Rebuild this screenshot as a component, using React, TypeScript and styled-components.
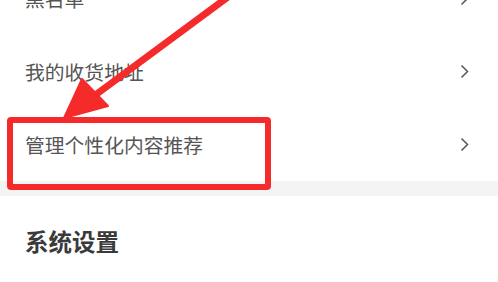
import styled, { createGlobalStyle } from "styled-components";

const GlobalStyle = createGlobalStyle`
  html, body {
    margin: 0;
    padding: 0;
    background: #ffffff;
    overflow: hidden;
  }
  body {
    font-family: "Noto Sans CJK SC", "Noto Sans", sans-serif;
  }
`;

const Page = styled.div`
  position: relative;
  width: 498px;
  height: 282px;
  overflow: hidden;
  background: #fff;
`;

const List = styled.div`
  display: flex;
  flex-direction: column;
  margin-top: -38px;
`;

const Row = styled.div`
  display: flex;
  align-items: center;
  justify-content: space-between;
  height: 73px;
  padding: 0 29px 0 25px;
`;

const Label = styled.span`
  font-size: 19.8px;
  color: #555555;
`;

const Divider = styled.div`
  height: 15px;
  background: #f4f4f4;
`;

const SectionTitle = styled.div`
  display: flex;
  align-items: center;
  height: 90px;
  padding-left: 25px;
  font-size: 23.5px;
  font-weight: 700;
  color: #3a3a3a;
`;

const Highlight = styled.div`
  position: absolute;
  left: 7px;
  top: 117px;
  width: 264px;
  height: 73px;
  box-sizing: border-box;
  border: 6px solid #f52a2a;
  border-radius: 4px;
`;

const Overlay = styled.svg`
  position: absolute;
  left: 0;
  top: 0;
`;

const Chevron = () => (
  <svg width="9" height="15" viewBox="0 0 9 15">
    <polyline points="1.5,1.5 7.5,7.5 1.5,13.5" fill="none" stroke="#5c5c5c" strokeWidth="1.6" />
  </svg>
);

const items = ["黑名单", "我的收货地址", "管理个性化内容推荐"];

const App = () => {
  return (
    <>
      <GlobalStyle />
      <Page>
        <List>
          {items.map((it) => (
            <Row key={it}>
              <Label>{it}</Label>
              <Chevron />
            </Row>
          ))}
          <Divider />
          <SectionTitle>系统设置</SectionTitle>
        </List>
        <Highlight />
        <Overlay width="498" height="282" viewBox="0 0 498 282">
          <line x1="232" y1="-6" x2="94" y2="96" stroke="#f52a2a" strokeWidth="7" strokeLinecap="round" />
          <polygon points="64,118 82,79 108,106" fill="#f52a2a" stroke="#f52a2a" strokeWidth="2" strokeLinejoin="round" />
        </Overlay>
      </Page>
    </>
  );
};

export default App;
